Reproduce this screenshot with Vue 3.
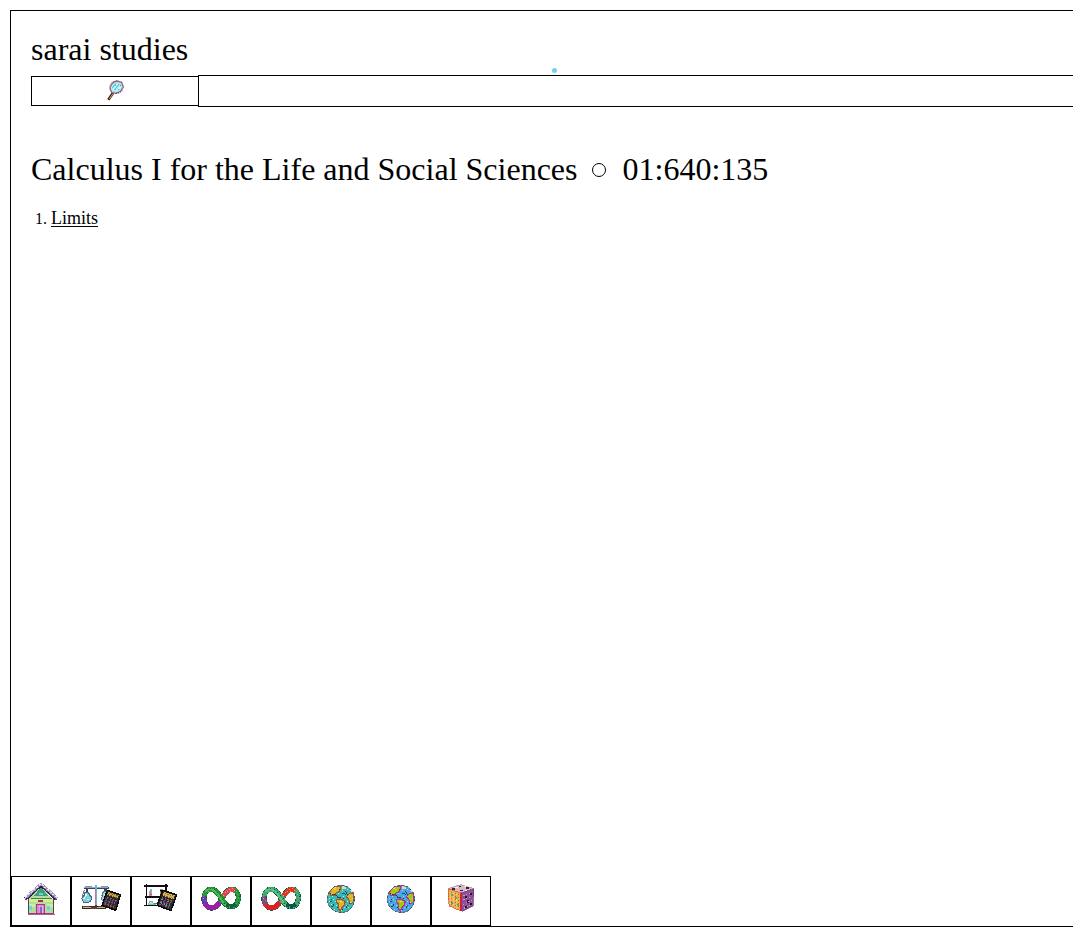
<script setup>
const speck = (points) => points.map(([x, y]) => `M${x} ${y}h3v3h-3z`).join('')
const loops = [
  { name: 'green loop', main: '#27953b', light: '#50bc4c', lower: '#9c1ca8', side: '#683aa8', top: '#e84058', deep: '#08653a' },
  { name: 'red loop', main: '#46a66a', light: '#5cc48b', lower: '#dc2024', side: '#79507e', top: '#ea2e23', deep: '#075d43' },
]
const globes = [
  { name: 'gold globe', sea: '#38b9b4', land: '#dfb72b', edge: '#9c5540', foam: '#b8eee0' },
  { name: 'green globe', sea: '#43a8e8', land: '#9dca13', edge: '#b72f94', foam: '#efb8ed' },
]
const loopPath = 'M95 74C84 56 76 46 64 46 50 46 42 58 42 72c0 18 10 30 24 30s22-14 30-28 16-28 30-28c12 0 19 12 19 25 0 17-9 27-21 27-14 0-20-10-29-24z'
const light = speck([[40,57],[46,51],[55,45],[67,45],[75,51],[81,60],[87,66],[93,75],[99,84],[105,93],[117,99],[142,60],[145,69],[139,51]])
const dark = speck([[37,60],[43,48],[51,42],[60,42],[72,45],[81,54],[90,63],[99,72],[102,87],[114,99],[126,102],[138,93],[144,84],[147,66],[87,78],[108,96]])
const gold = speck([[111,51],[117,44],[126,42],[132,48],[120,50],[105,54],[99,63],[54,51],[40,72]])
const foamPixels = speck([[75,38],[95,47],[66,66],[57,72],[75,81],[78,93],[111,80],[120,83],[102,99],[108,93],[126,72],[99,65],[84,56],[57,81],[63,90],[72,105],[93,108],[114,99],[69,75],[111,45]])
const seaDots = speck([[87,44],[105,51],[111,61],[63,75],[69,90],[81,99],[117,87],[99,72],[60,57],[96,105]])
</script>

<template>
  <div class="viewport">
    <main class="frame">
      <div class="content">
        <header class="brand">sarai studies</header>
        <div class="search">
          <button class="search-button" aria-label="Search">
            <svg class="lens" viewBox="33 24 54 66">
              <path d="M54 63 40 83" stroke="#171522" stroke-width="8" />
              <path d="M54 65 42 81" stroke="#d68b38" stroke-width="3.5" />
              <path d="m45 45 8-12 13-6 14 4 5 14-8 13-14 6-13-3-4-8z" fill="#aee9ef" stroke="#98637f" stroke-width="4" />
              <path d="m45 38 8-9 14-3M83 54l-9 9-14 2" fill="none" stroke="#352b44" stroke-width="2" stroke-dasharray="4 3" />
              <path d="m52 48 10-12M58 54l14-18" stroke="#20cbd3" stroke-width="3" />
              <path d="m54 53 13-17M67 56l9-11" stroke="#fff" stroke-width="3" />
              <path d="M75 39h3v3h-3zM70 51h3v3h-3zM60 38h3v3h-3z" fill="#428bbf" />
            </svg>
          </button>
          <input class="search-input" aria-label="Search text" />
        </div>
        <h1 class="course"><span>Calculus I for the Life and Social Sciences</span><span class="ring"></span><span>01:640:135</span></h1>
        <ol class="topics"><li><a href="#">Limits</a></li></ol>
      </div>
      <nav class="dock">
        <button aria-label="Home">
          <svg viewBox="12 15 174 144">
            <path d="M60 83 99 44l40 42v39H61z" fill="#b3dca0" />
            <path d="m75 73 24-26 24 26z" fill="#479b7d" />
            <path d="M63 84h73M63 99h19M117 99h20" stroke="#d5ed8a" stroke-width="9" />
            <path d="M62 78v45h75V78" fill="none" stroke="#53405e" stroke-width="3" />
            <path d="M61 124h78" stroke="#be2881" stroke-width="5" />
            <path d="M60 128h80" stroke="#5f2551" stroke-width="2" />
            <path d="M69 78h62" stroke="#387f69" stroke-width="3" />
            <path d="M86 123V97h24v26" fill="#cf8bd5" stroke="#ae328a" stroke-width="4" />
            <path d="M93 123v-20h10v20" fill="#9661b9" stroke="#e3c7e9" stroke-width="2" />
            <path d="M64 106h9M116 106h10M94 65h11M68 109v6M121 108v6" stroke="#58ded8" stroke-width="7" />
            <path d="M91 85h15v5H91z" fill="#a52d54" />
            <path d="m52 81 47-43 47 43" fill="none" stroke="#292039" stroke-width="11" />
            <path d="m51 78 48-42 49 43" fill="none" stroke="#a293bf" stroke-width="8" />
            <path d="m51 76 48-41 48 42" fill="none" stroke="#eee4f4" stroke-width="4" stroke-dasharray="7 4" />
            <path d="m53 84 46-44 47 44" fill="none" stroke="#713e80" stroke-width="3" stroke-dasharray="6 5" />
            <path d="m67 62 8-8M122 52l8 7" stroke="#84c7cd" stroke-width="3" />
          </svg>
        </button>
        <button aria-label="Balance and calculator">
          <svg viewBox="6 9 174 144">
            <path d="M36 96h70v8H36z" fill="#cfab83" stroke="#302a2a" stroke-width="3" />
            <path d="M39 97h18M63 102h17M87 97h15" stroke="#713c24" stroke-width="4" />
            <path d="M78 33v62M42 42h74M51 45v14M106 45v13" fill="none" stroke="#334456" stroke-width="8" />
            <path d="M78 32v61M43 41h71" stroke="#78b3c3" stroke-width="4" />
            <path d="M45 38h20M94 38h20M75 46v45" stroke="#ab7dbb" stroke-width="3" />
            <path d="M44 48 36 66M51 48l11 18M104 48 95 66M112 48l12 16" stroke="#333b43" stroke-width="2" />
            <path d="m45 54 9 3 11 13-3 12-10 5-12-3-5-11 8-10z" fill="#80d1df" stroke="#416b7e" stroke-width="3" />
            <path d="M45 60h5v4h-5M41 75l7-9M52 76h5" stroke="#e4fbfc" stroke-width="3" fill="none" />
            <path d="m98 57 8-6 11 8 5 14-13 13-14-9z" fill="#8fd2e1" stroke="#507e98" stroke-width="3" />
            <path d="M102 61h11M101 71h12" stroke="#ddfafd" stroke-width="3" />
            <path d="m112 49 40 13-15 47-41-15z" fill="#2d2730" stroke="#08090c" stroke-width="4" />
            <path d="m115 54 31 10-3 9-31-10z" fill="#d1a43c" />
            <path d="m116 57 27 9M113 62l27 9" stroke="#533d22" stroke-width="2" stroke-dasharray="5 3" />
            <path d="m111 70 29 10M107 79l29 10M104 88l28 11" stroke="#9c5555" stroke-width="5" stroke-dasharray="5 4" />
            <path d="m110 74 29 10M106 84l28 10" stroke="#366777" stroke-width="3" stroke-dasharray="4 5" />
            <path d="m110 72-8 21M130 78l-7 21" stroke="#653b72" stroke-width="3" />
          </svg>
        </button>
        <button aria-label="Laboratory and calculator">
          <svg viewBox="6 9 174 144">
            <path d="M50 30v65M108 31v29M43 36h71M44 69h48M42 95h48" stroke="#111018" stroke-width="4" />
            <path d="M57 52h10v14H57z" fill="#db8aa6" />
            <path d="M59 44h6v10h-6z" fill="#61c3bf" />
            <path d="M89 52h12v14H89z" fill="#d98b44" />
            <path d="M91 47h8v4h-8M59 61h7M92 61h7" stroke="#83514b" stroke-width="2" />
            <path d="m55 91 5-10h6l6 10z" fill="#b1e3ea" stroke="#658d95" stroke-width="2" />
            <path d="M67 89h12l-3 5h-8z" fill="#83c954" /><path d="M72 86h9v3h-9z" fill="#2c9278" />
            <path d="m98 49 42 13-17 48-42-16z" fill="#2c2830" stroke="#08090c" stroke-width="4" />
            <path d="m102 54 32 10-4 12-32-11z" fill="#dbb447" />
            <path d="m104 58 26 8M101 64l27 9" stroke="#544626" stroke-width="2" stroke-dasharray="5 3" />
            <path d="m95 71 31 10M91 81l30 11M88 90l30 11" stroke="#a05155" stroke-width="5" stroke-dasharray="5 4" />
            <path d="m94 76 30 10M91 86l28 10" stroke="#5b9aab" stroke-width="4" stroke-dasharray="5 4" />
            <path d="m107 76-9 20" stroke="#563a79" stroke-width="4" />
          </svg>
        </button>
        <button v-for="loop in loops" :key="loop.name" :aria-label="loop.name">
          <svg viewBox="6 9 174 144">
            <path :d="loopPath" fill="none" :stroke="loop.deep" stroke-width="16" />
            <path :d="loopPath" fill="none" :stroke="loop.main" stroke-width="14" />
            <path d="M42 74c0 17 10 28 24 28 10 0 17-8 23-18" fill="none" :stroke="loop.lower" stroke-width="15" />
            <path d="M41 67c0 12 2 18 7 25" fill="none" :stroke="loop.side" stroke-width="13" />
            <path d="m100 66 10-13 14-7 11 4" fill="none" :stroke="loop.top" stroke-width="14" />
            <path d="M47 52c14-12 24-4 34 7l24 34" fill="none" :stroke="loop.light" stroke-width="6" stroke-dasharray="8 3" />
            <path d="m109 91 14 7 14-6" fill="none" :stroke="loop.deep" stroke-width="12" />
            <path :d="light" :fill="loop.light" /><path :d="dark" :fill="loop.deep" /><path :d="gold" fill="#eea64c" />
            <path d="M38 66h3v3h-3zM44 79h3v3h-3zM116 96h3v3h-3zM138 87h3v3h-3zM129 99h3v3h-3zM142 78h3v3h-3z" fill="#6384b5" />
          </svg>
        </button>
        <button v-for="globe in globes" :key="globe.name" :aria-label="globe.name">
          <svg viewBox="6 9 174 144">
            <circle cx="93" cy="75" r="41" :fill="globe.sea" stroke="#607b80" stroke-width="2" />
            <path d="m67 43 9-6 18-1-3 10-5 8-8 3-3 8-6-2-7 2-4-10z" :fill="globe.land" :stroke="globe.edge" stroke-width="3" />
            <path d="m79 77 13-2 14 7-3 12-8 6-3 11-6-6v-15l-8-6z" :fill="globe.land" :stroke="globe.edge" stroke-width="4" />
            <path d="m116 60 12-4 4 14-2 14-9 6-4-13-8-8z" :fill="globe.land" :stroke="globe.edge" stroke-width="3" />
            <path d="m97 36 13 3-4 8-10-2zM119 50l7-2 4 8z" fill="#ebd2ba" />
            <path d="M66 62h12l5 7h11M95 57h9M111 53l-4 9M58 81l7 3M65 99l7-5M108 101l4-7" fill="none" stroke="#25495b" stroke-width="3" />
            <path :d="seaDots" fill="#263c4d" /><path :d="foamPixels" :fill="globe.foam" />
            <path d="M69 41h6v3h-6zM75 46h4v3h-4zM91 82h5v3h-5z" fill="#eadf58" />
            <circle cx="93" cy="75" r="41" fill="none" stroke="#273f42" stroke-width="2" stroke-dasharray="6 7" />
          </svg>
        </button>
        <button aria-label="Dice">
          <svg viewBox="6 9 174 144">
            <path d="m56 43 36-11 39 12-38 14z" fill="#d9b9c4" stroke="#a58090" stroke-width="2" />
            <path d="m55 44 38 13v54l-35-15-3-21z" fill="#edae43" stroke="#cd484d" stroke-width="2" />
            <path d="m93 57 38-12-1 50-34 17z" fill="#8d519a" stroke="#643970" stroke-width="2" />
            <path d="M93 57v53" stroke="#cc2531" stroke-width="6" />
            <path d="M61 54v38M70 57v40M79 60v41" stroke="#f5df6e" stroke-width="3" stroke-dasharray="4 4" />
            <path d="M64 53v41M75 57v42M85 60v45" stroke="#dc5150" stroke-width="3" stroke-dasharray="3 6" />
            <path d="M63 61h5v6h-5zM74 70h6v6h-6zM64 84h5v6h-5zM82 91h5v6h-5z" fill="#3daa9c" />
            <path d="m100 65 27-11M100 78l27-12M100 91l27-13M102 103l24-13" stroke="#ce93cf" stroke-width="3" stroke-dasharray="4 5" />
            <path d="M106 67h6v6h-6zM119 57h6v6h-6zM112 79h6v7h-6zM104 96h6v5h-6zM120 86h5v7h-5z" fill="#241425" />
            <path d="M114 81h3v3h-3z" fill="#cbab55" />
            <path d="M66 45h9M86 37h8M89 49h11M109 42h9" stroke="#33252d" stroke-width="5" />
            <path d="M76 39h7M101 37h7M104 49h7" stroke="#fff0df" stroke-width="3" />
          </svg>
        </button>
      </nav>
    </main>
    <span class="pointer"></span>
  </div>
</template>

<style>
body { margin: 0; background: #fff; }
</style>

<style scoped>
.viewport { position: relative; box-sizing: border-box; height: 941px; padding: 10px 0 0 10px; overflow: hidden; color: #000; font-family: "Liberation Serif", "Times New Roman", serif; }
.frame { display: flex; flex-direction: column; justify-content: space-between; box-sizing: border-box; width: 1100px; height: 917px; border: 1px solid #000; }
.content { padding: 20px; }
.brand { height: 44px; font-size: 32px; line-height: 37px; }
.search { display: flex; align-items: center; height: 32px; }
.search-button { display: flex; flex-shrink: 0; align-items: center; justify-content: center; box-sizing: border-box; width: 168px; height: 30px; padding: 0; border: 1px solid #000; background: #fff; }
.lens { width: 18px; height: 22px; }
.search-input { box-sizing: border-box; width: 1000px; height: 32px; margin: 0 0 0 -1px; padding: 0 10px; border: 1px solid #000; border-radius: 0; background: #fff; flex-shrink: 0; outline: 0; }
.course { display: flex; align-items: center; height: 37px; margin: 44px 0 0; font-size: 32px; font-weight: 400; line-height: 37px; white-space: nowrap; }
.ring { box-sizing: border-box; width: 14px; height: 14px; margin: 0 16px 0 15px; border: 1px solid #000; border-radius: 50%; }
.topics { margin: 20px 0 0; padding: 0 0 0 20px; font-size: 16px; line-height: 21px; }
.topics a { color: #000; font-size: 18px; text-decoration: underline; text-underline-offset: 2px; text-decoration-thickness: 1px; }
.dock { display: flex; }
.dock button { display: block; box-sizing: border-box; width: 60px; height: 50px; padding: 0; border: 1px solid #000; background: #fff; }
.dock svg { display: block; width: 58px; height: 48px; shape-rendering: crispEdges; }
.pointer { position: absolute; left: 552px; top: 68px; width: 5px; height: 5px; border-radius: 50%; background: #72d0f5; }
</style>
